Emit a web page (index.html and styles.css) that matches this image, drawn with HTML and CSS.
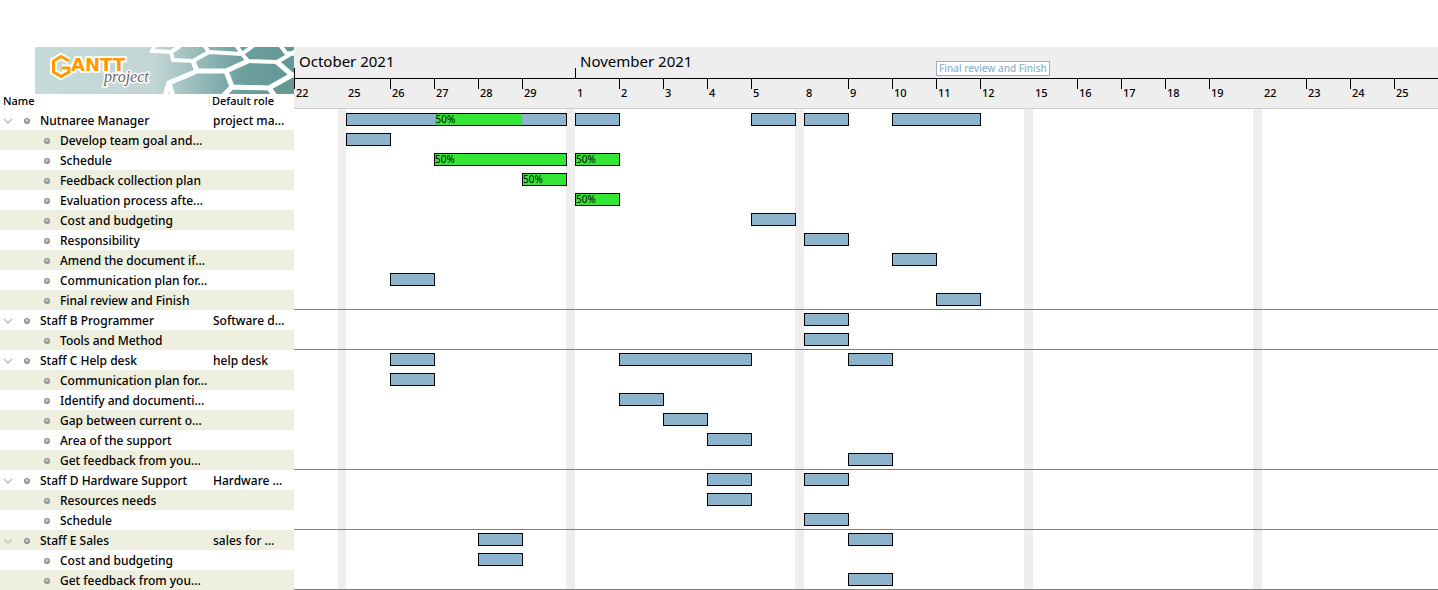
FILE: index.html
```html
<!DOCTYPE html>
<html lang="en">
<head>
<meta charset="utf-8">
<title>GanttProject – Resources</title>
<link rel="stylesheet" href="styles.css">
</head>
<body>
<svg class="defs" width="0" height="0" aria-hidden="true">
  <defs>
    <radialGradient id="ball" cx="45%" cy="35%" r="65%"><stop offset="0" stop-color="#d2d2d2"/><stop offset="1" stop-color="#8c8c8c"/></radialGradient>
    <symbol id="dot" viewBox="0 0 8 8"><circle cx="4" cy="4" r="2.7" fill="url(#ball)" stroke="#858585" stroke-width=".8"/></symbol>
    <symbol id="chevron" viewBox="0 0 10 6"><path d="M1 1l4 4 4-4" fill="none" stroke="#bdbdbd" stroke-width="1.3"/></symbol>
  </defs>
</svg>
<main class="app">
  <section class="resources">
    <svg class="logo" viewBox="0 0 259 47" role="img" aria-label="GanttProject">
      <defs><linearGradient id="teal" x1="0" x2="1"><stop offset="0" stop-color="#c6dad9"/><stop offset=".46" stop-color="#c2d6d6"/><stop offset=".8" stop-color="#6c9f9e"/><stop offset="1" stop-color="#639796"/></linearGradient></defs>
      <rect width="259" height="47" fill="url(#teal)"/>
      <g fill="none" stroke="#fff" stroke-width="4">
        <path d="M119-1L117 4L136 5L145-1M136 5L138 13L158 14L174 5L169-2M174 5L207 7L201-2M207 7L219-2M207 7L213 14L242 15L261 4M245-2L251 6L261 7"/>
        <path stroke-width="5" d="M158 14L162 24L191 24L213 14M162 24L134 36L138 49M134 36L130 49M191 24L197 40L234 41L257 28L242 15M197 40L188 49M234 41L240 49M257 28L262 28"/>
      </g>
      <path d="M34 14L26 9.500L18.500 14V25L26 29.500L34 25V21H27" fill="none" stroke="#fff" stroke-width="7"/>
      <text class="logo-name" x="36" y="24">ANTT</text>
      <path d="M34 14L26 9.500L18.500 14V25L26 29.500L34 25V21H27" fill="none" stroke="#ff9900" stroke-width="3"/>
      <text class="logo-sub" x="69" y="35">project</text>
    </svg>
    <table class="tree">
      <thead><tr><th class="name-head">Name</th><th class="role-head">Default role</th></tr></thead>
      <tbody>
        <tr><td><div class="cell"><button class="toggle" aria-label="Collapse"><svg class="chev"><use href="#chevron"/></svg></button><svg class="dot"><use href="#dot"/></svg>Nutnaree Manager</div></td><td class="role">project ma...</td></tr>
        <tr><td><div class="cell child"><svg class="dot"><use href="#dot"/></svg>Develop team goal and...</div></td><td></td></tr>
        <tr><td><div class="cell child"><svg class="dot"><use href="#dot"/></svg>Schedule</div></td><td></td></tr>
        <tr><td><div class="cell child"><svg class="dot"><use href="#dot"/></svg>Feedback collection plan</div></td><td></td></tr>
        <tr><td><div class="cell child"><svg class="dot"><use href="#dot"/></svg>Evaluation process afte...</div></td><td></td></tr>
        <tr><td><div class="cell child"><svg class="dot"><use href="#dot"/></svg>Cost and budgeting</div></td><td></td></tr>
        <tr><td><div class="cell child"><svg class="dot"><use href="#dot"/></svg>Responsibility</div></td><td></td></tr>
        <tr><td><div class="cell child"><svg class="dot"><use href="#dot"/></svg>Amend the document if...</div></td><td></td></tr>
        <tr><td><div class="cell child"><svg class="dot"><use href="#dot"/></svg>Communication plan for...</div></td><td></td></tr>
        <tr><td><div class="cell child"><svg class="dot"><use href="#dot"/></svg>Final review and Finish</div></td><td></td></tr>
        <tr><td><div class="cell"><button class="toggle" aria-label="Collapse"><svg class="chev"><use href="#chevron"/></svg></button><svg class="dot"><use href="#dot"/></svg>Staff B Programmer</div></td><td class="role">Software d...</td></tr>
        <tr><td><div class="cell child"><svg class="dot"><use href="#dot"/></svg>Tools and Method</div></td><td></td></tr>
        <tr><td><div class="cell"><button class="toggle" aria-label="Collapse"><svg class="chev"><use href="#chevron"/></svg></button><svg class="dot"><use href="#dot"/></svg>Staff C Help desk</div></td><td class="role">help desk</td></tr>
        <tr><td><div class="cell child"><svg class="dot"><use href="#dot"/></svg>Communication plan for...</div></td><td></td></tr>
        <tr><td><div class="cell child"><svg class="dot"><use href="#dot"/></svg>Identify and documenti...</div></td><td></td></tr>
        <tr><td><div class="cell child"><svg class="dot"><use href="#dot"/></svg>Gap between current o...</div></td><td></td></tr>
        <tr><td><div class="cell child"><svg class="dot"><use href="#dot"/></svg>Area of the support</div></td><td></td></tr>
        <tr><td><div class="cell child"><svg class="dot"><use href="#dot"/></svg>Get feedback from you...</div></td><td></td></tr>
        <tr><td><div class="cell"><button class="toggle" aria-label="Collapse"><svg class="chev"><use href="#chevron"/></svg></button><svg class="dot"><use href="#dot"/></svg>Staff D Hardware Support</div></td><td class="role">Hardware ...</td></tr>
        <tr><td><div class="cell child"><svg class="dot"><use href="#dot"/></svg>Resources needs</div></td><td></td></tr>
        <tr><td><div class="cell child"><svg class="dot"><use href="#dot"/></svg>Schedule</div></td><td></td></tr>
        <tr><td><div class="cell"><button class="toggle" aria-label="Collapse"><svg class="chev"><use href="#chevron"/></svg></button><svg class="dot"><use href="#dot"/></svg>Staff E Sales</div></td><td class="role">sales for ...</td></tr>
        <tr><td><div class="cell child"><svg class="dot"><use href="#dot"/></svg>Cost and budgeting</div></td><td></td></tr>
        <tr><td><div class="cell child"><svg class="dot"><use href="#dot"/></svg>Get feedback from you...</div></td><td></td></tr>
      </tbody>
    </table>
  </section>
  <section class="chart">
    <header class="timeline">
      <div class="months days-grid">
        <div class="month october">October 2021</div>
        <div class="month november">November 2021</div>
        <div class="milestone">Final review and Finish</div>
      </div>
      <div class="days days-grid">
        <span class="day tick">22</span><span></span>
        <span class="day">25</span><span class="day tick">26</span><span class="day tick">27</span><span class="day tick">28</span><span class="day tick">29</span><span></span>
        <span class="day">1</span><span class="day tick">2</span><span class="day tick">3</span><span class="day tick">4</span><span class="day tick">5</span><span></span>
        <span class="day">8</span><span class="day tick">9</span><span class="day tick">10</span><span class="day tick">11</span><span class="day tick">12</span><span></span>
        <span class="day">15</span><span class="day tick">16</span><span class="day tick">17</span><span class="day tick">18</span><span class="day tick">19</span><span></span>
        <span class="day">22</span><span class="day tick">23</span><span class="day tick">24</span><span class="day tick">25</span>
      </div>
    </header>
    <div class="plot">
      <div class="weekends days-grid"><i style="grid-column:2"></i><i style="grid-column:8"></i><i style="grid-column:14"></i><i style="grid-column:20"></i><i style="grid-column:26"></i></div>
      <div class="rows">
        <div class="row days-grid"><div class="bar" style="grid-column:3/8"><span class="part" style="margin-left:40%;width:40%">50%</span></div><div class="bar" style="grid-column:9/10"></div><div class="bar" style="grid-column:13/14"></div><div class="bar" style="grid-column:15/16"></div><div class="bar" style="grid-column:17/19"></div></div>
        <div class="row days-grid"><div class="bar" style="grid-column:3/4"></div></div>
        <div class="row days-grid"><div class="bar load" style="grid-column:5/8">50%</div><div class="bar load" style="grid-column:9/10">50%</div></div>
        <div class="row days-grid"><div class="bar load" style="grid-column:7/8">50%</div></div>
        <div class="row days-grid"><div class="bar load" style="grid-column:9/10">50%</div></div>
        <div class="row days-grid"><div class="bar" style="grid-column:13/14"></div></div>
        <div class="row days-grid"><div class="bar" style="grid-column:15/16"></div></div>
        <div class="row days-grid"><div class="bar" style="grid-column:17/18"></div></div>
        <div class="row days-grid"><div class="bar" style="grid-column:4/5"></div></div>
        <div class="row days-grid last"><div class="bar" style="grid-column:18/19"></div></div>
        <div class="row days-grid"><div class="bar" style="grid-column:15/16"></div></div>
        <div class="row days-grid last"><div class="bar" style="grid-column:15/16"></div></div>
        <div class="row days-grid"><div class="bar" style="grid-column:4/5"></div><div class="bar" style="grid-column:10/13"></div><div class="bar" style="grid-column:16/17"></div></div>
        <div class="row days-grid"><div class="bar" style="grid-column:4/5"></div></div>
        <div class="row days-grid"><div class="bar" style="grid-column:10/11"></div></div>
        <div class="row days-grid"><div class="bar" style="grid-column:11/12"></div></div>
        <div class="row days-grid"><div class="bar" style="grid-column:12/13"></div></div>
        <div class="row days-grid last"><div class="bar" style="grid-column:16/17"></div></div>
        <div class="row days-grid"><div class="bar" style="grid-column:12/13"></div><div class="bar" style="grid-column:15/16"></div></div>
        <div class="row days-grid"><div class="bar" style="grid-column:12/13"></div></div>
        <div class="row days-grid last"><div class="bar" style="grid-column:15/16"></div></div>
        <div class="row days-grid"><div class="bar" style="grid-column:6/7"></div><div class="bar" style="grid-column:16/17"></div></div>
        <div class="row days-grid"><div class="bar" style="grid-column:6/7"></div></div>
        <div class="row days-grid last"><div class="bar" style="grid-column:16/17"></div></div>
      </div>
    </div>
  </section>
</main>
</body>
</html>
```
FILE: styles.css
```css
* { box-sizing: border-box; }

body {
  margin: 0;
  background: #fff;
  color: #000;
  font: 500 12px/20px "Noto Sans", "Open Sans", sans-serif;
}

.defs { position: absolute; }

.app {
  display: flex;
  align-items: flex-start;
  padding-top: 47px;
}

/* Resource tree */
.resources { flex: none; width: 294px; }

.logo {
  display: block;
  width: 259px;
  height: 47px;
  margin-left: auto;
}

.logo-name {
  font: bold 18px "DejaVu Sans", sans-serif;
  fill: #ff9900;
  stroke: #fff;
  stroke-width: 4px;
  stroke-linejoin: round;
  paint-order: stroke;
}

.logo-sub {
  font: italic 16px "Liberation Serif", serif;
  fill: #666;
  stroke: #fff;
  stroke-width: 3px;
  stroke-linejoin: round;
  paint-order: stroke;
}

.tree {
  width: 100%;
  border-collapse: collapse;
  table-layout: fixed;
}

.tree th,
.tree td { padding: 0; text-align: left; white-space: nowrap; }

.tree th {
  height: 16px;
  padding-left: 3px;
  font-size: 11px;
  font-weight: 500;
  line-height: 14px;
  vertical-align: top;
}

.tree .name-head { width: 209px; }

.role-head { background: linear-gradient(#ddd, #ddd) no-repeat 0 1px / 1px 12px; }

.tree td { height: 20px; padding-top: 2px; line-height: 18px; }
.tree tbody tr:nth-child(even) { background: #efefdf; }
.tree .role { padding-left: 4px; }

.cell {
  display: flex;
  align-items: center;
  padding-left: 3px;
}

.cell.child { padding-left: 43px; }

.toggle {
  display: flex;
  width: 20px;
  padding: 0;
  border: 0;
  background: none;
}

.chev { width: 10px; height: 6px; }

.dot {
  flex: none;
  width: 8px;
  height: 8px;
  margin-right: 9px;
}

/* Timeline */
.chart { flex: 1; min-width: 0; overflow: hidden; }

.days-grid {
  display: grid;
  grid-template-columns: 44px 8px repeat(5, 44px) 9px repeat(5, 44px) 9px repeat(5, 44px) 9px repeat(5, 44px) 9px repeat(4, 44px) 1fr;
}

.timeline { background: #eee; border-bottom: 1px solid #ccc; }

.months { height: 32px; border-bottom: 1px solid #000; }

.month {
  padding: 4px 0 0 5px;
  background: linear-gradient(#000, #000) no-repeat 0 100% / 1px 10px;
  font-size: 15px;
  font-weight: 400;
}

.october { grid-column: 1 / 9; }
.november { grid-column: 9 / 18; }

.milestone {
  grid-column: 18 / 22;
  place-self: end start;
  margin-bottom: 2px;
  padding: 0 2px;
  border: 1px solid #8cb4cd;
  background: #fff;
  color: #8cb4cd;
  font-size: 10px;
  line-height: 13px;
}

.days { height: 29px; }

.day {
  padding: 7px 0 0 2px;
  font-size: 11px;
  line-height: 14px;
}

.tick { background: linear-gradient(#000, #000) no-repeat 0 0 / 1px 10px; }

/* Load bars */
.plot { display: grid; }
.weekends,
.rows { grid-area: 1 / 1; }
.weekends i { background: #eee; }
.rows { padding-top: 1px; }

.row { height: 20px; padding-top: 3px; }
.row.last { border-bottom: 1px solid #808080; }

.bar {
  grid-row: 1;
  display: flex;
  height: 13px;
  margin-right: -1px;
  border: 1px solid #000;
  background: #8cb4cd;
  font-size: 10px;
  font-weight: 400;
  line-height: 11px;
}

.load,
.part { background: #33e633; }

.part { padding-left: 1px; }
```
